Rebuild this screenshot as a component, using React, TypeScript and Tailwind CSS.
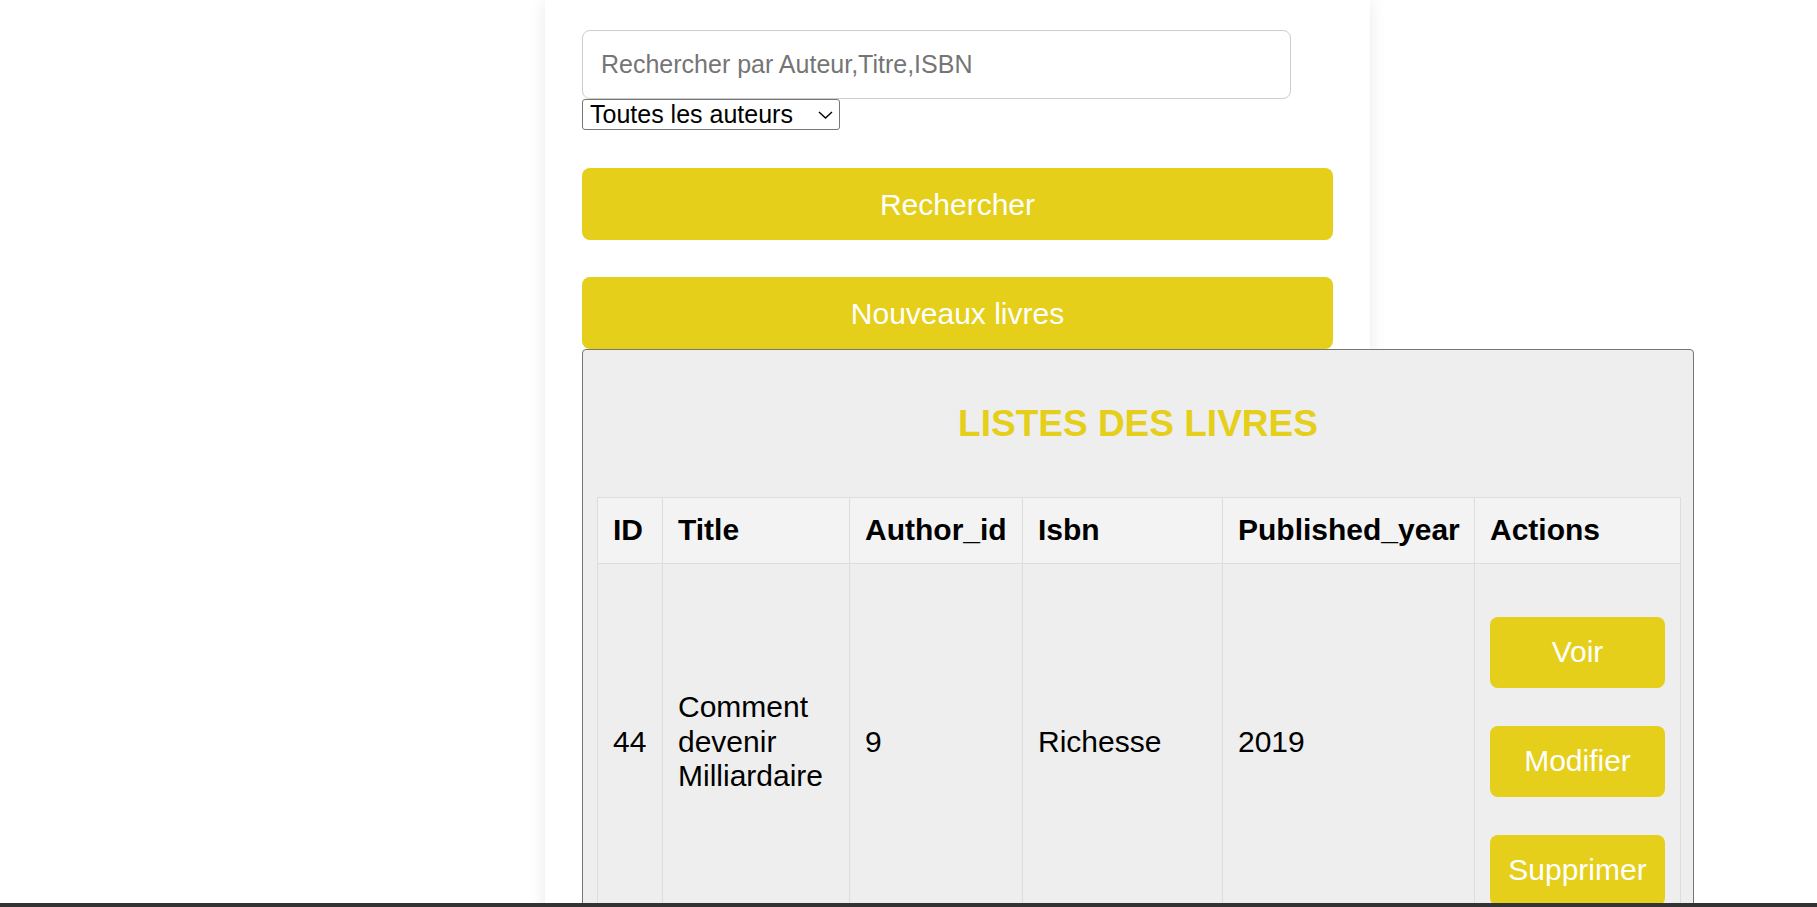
const yellow = "bg-[#e5cf1a]";

const books = [
  { id: 44, title: "Comment devenir Milliardaire", author_id: 9, isbn: "Richesse", year: 2019 },
];

const ActionButton = ({ label }: { label: string }) => (
  <button
    type="button"
    className={`${yellow} mt-[38px] block h-[71px] w-full rounded-[8px] text-[30px] leading-[34px] text-white`}
  >
    {label}
  </button>
);

const App = () => {
  return (
    <div
      className="relative h-[907px] w-full overflow-hidden bg-white text-black"
      style={{ fontFamily: '"Liberation Sans", Arial, sans-serif' }}
    >
      <div className="ml-[545px] min-h-[907px] w-[825px] bg-white px-[37px] pt-[30px] shadow-[0_0_16px_rgba(0,0,0,0.09)]">
        <input
          type="text"
          placeholder="Rechercher par Auteur,Titre,ISBN"
          className="block h-[69px] w-[709px] rounded-[8px] border border-[#cccccc] bg-white px-[18px] text-[25px] outline-none placeholder:text-[#757575]"
        />
        <div className="relative h-[31px] w-[258px]">
          <select className="block h-[31px] w-[258px] appearance-none rounded-[3px] border border-[#767676] bg-white pl-[7px] text-[25px] leading-[29px] text-black outline-none">
            <option>Toutes les auteurs</option>
          </select>
          <svg
            className="pointer-events-none absolute left-[236px] top-[12px]"
            width="15"
            height="8"
            viewBox="0 0 15 8"
            fill="none"
          >
            <path d="M1 1l6.5 6L14 1" stroke="#000" strokeWidth="1.4" />
          </svg>
        </div>

        <button
          type="button"
          className={`${yellow} mt-[38px] block h-[72px] w-full rounded-[8px] text-[30px] text-white`}
        >
          Rechercher
        </button>
        <button
          type="button"
          className={`${yellow} mt-[37px] block h-[72px] w-full rounded-[8px] text-[30px] text-white`}
        >
          Nouveaux livres
        </button>

        <div className="w-[1112px] rounded-[4px] border border-[#767676] bg-[#eeeeee] px-[14px] pt-[14px]">
          <h2 className="mt-[39px] mb-[52px] text-center text-[37px] font-bold leading-[42px] text-[#e5cf1a]">
            LISTES DES LIVRES
          </h2>
          <table className="w-[1083px] table-fixed border-collapse text-[30px]">
            <colgroup>
              <col className="w-[65px]" />
              <col className="w-[187px]" />
              <col className="w-[173px]" />
              <col className="w-[200px]" />
              <col className="w-[252px]" />
              <col className="w-[206px]" />
            </colgroup>
            <thead>
              <tr className="bg-[#f3f3f3]">
                {["ID", "Title", "Author_id", "Isbn", "Published_year", "Actions"].map((h) => (
                  <th
                    key={h}
                    className="border border-[#dddddd] p-[15px] text-left font-bold leading-[34.5px]"
                  >
                    {h}
                  </th>
                ))}
              </tr>
            </thead>
            <tbody>
              {books.map((b) => (
                <tr key={b.id} className="bg-[#eeeeee]">
                  <td className="border border-[#dddddd] p-[15px] align-middle leading-[34.5px]">{b.id}</td>
                  <td className="border border-[#dddddd] p-[15px] align-middle leading-[34.5px]">{b.title}</td>
                  <td className="border border-[#dddddd] p-[15px] align-middle leading-[34.5px]">{b.author_id}</td>
                  <td className="border border-[#dddddd] p-[15px] align-middle leading-[34.5px]">{b.isbn}</td>
                  <td className="border border-[#dddddd] p-[15px] align-middle leading-[34.5px]">{b.year}</td>
                  <td className="border border-[#dddddd] p-[15px] align-middle">
                    <ActionButton label="Voir" />
                    <ActionButton label="Modifier" />
                    <ActionButton label="Supprimer" />
                  </td>
                </tr>
              ))}
            </tbody>
          </table>
        </div>
      </div>

      <div className="fixed bottom-0 left-0 h-[4px] w-full bg-[#333333]" />
    </div>
  );
};

export default App;
